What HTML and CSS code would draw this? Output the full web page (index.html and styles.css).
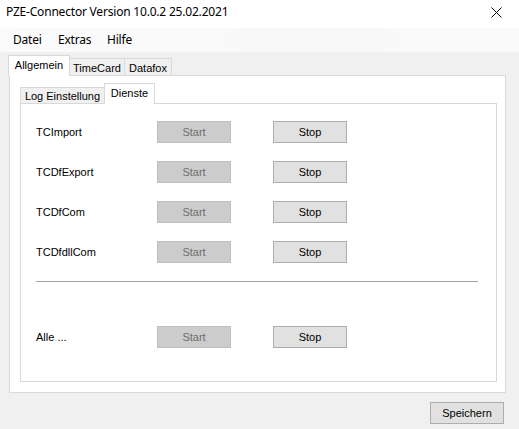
FILE: index.html
```html
<!DOCTYPE html>
<html lang="de">
<head>
<meta charset="utf-8">
<title>PZE-Connector</title>
<link rel="stylesheet" href="styles.css">
</head>
<body>
<div class="window">
  <div class="titlebar">
    <span class="title">PZE-Connector Version 10.0.2 25.02.2021</span>
    <span class="close">
      <svg width="11" height="11" viewBox="0 0 11 11"><path d="M0.5 0.5 L10.5 10.5 M10.5 0.5 L0.5 10.5" stroke="#000" stroke-width="1" fill="none"/></svg>
    </span>
  </div>
  <div class="menubar">
    <span class="menu-item m-datei">Datei</span>
    <span class="menu-item m-extras">Extras</span>
    <span class="menu-item">Hilfe</span>
  </div>
  <div class="main">
    <div class="tabs outer-tabs">
      <div class="tabstrip">
        <div class="tab selected w-allg">Allgemein</div>
        <div class="tab w-time">TimeCard</div>
        <div class="tab w-dfox">Datafox</div>
      </div>
      <div class="panel outer-panel">
        <div class="tabs inner-tabs">
          <div class="tabstrip">
            <div class="tab w-log">Log Einstellung</div>
            <div class="tab selected w-dien">Dienste</div>
          </div>
          <div class="panel inner-panel">
            <div class="row">
              <span class="label">TCImport</span>
              <span class="btn disabled">Start</span>
              <span class="btn">Stop</span>
            </div>
            <div class="row">
              <span class="label">TCDfExport</span>
              <span class="btn disabled">Start</span>
              <span class="btn">Stop</span>
            </div>
            <div class="row">
              <span class="label">TCDfCom</span>
              <span class="btn disabled">Start</span>
              <span class="btn">Stop</span>
            </div>
            <div class="row">
              <span class="label">TCDfdllCom</span>
              <span class="btn disabled">Start</span>
              <span class="btn">Stop</span>
            </div>
            <div class="separator"></div>
            <div class="row row-all">
              <span class="label">Alle ...</span>
              <span class="btn disabled">Start</span>
              <span class="btn">Stop</span>
            </div>
          </div>
        </div>
      </div>
    </div>
    <div class="footer">
      <span class="btn save">Speichern</span>
    </div>
  </div>
</div>
</body>
</html>
```

FILE: styles.css
```css
* { box-sizing: border-box; }
html, body { margin: 0; padding: 0; }
body {
  width: 519px;
  height: 429px;
  background: #f0f0f0;
  overflow: hidden;
  font-family: "Liberation Sans", Arial, sans-serif;
  font-size: 11px;
  color: #000;
}
.window { width: 519px; height: 429px; display: flex; flex-direction: column; }

.titlebar {
  height: 28px;
  background: #fff;
  display: flex;
  align-items: center;
  justify-content: space-between;
  padding-left: 6px;
  padding-right: 17px;
}
.title {
  font-family: "Noto Sans", "Open Sans", sans-serif;
  font-size: 12px;
  letter-spacing: -0.2px;
  line-height: 16px;
  margin-top: -4px;
}
.close {
  width: 11px;
  height: 11px;
  margin-top: -4px;
}
.close svg { display: block; }

.menubar {
  height: 24px;
  background: linear-gradient(to right, #fbfbfb, #f8f8f8 60%, #fafafa);
  display: flex;
  align-items: center;
  padding-left: 13px;
  font-family: "Noto Sans", "Open Sans", sans-serif;
  font-size: 12px;
  letter-spacing: -0.2px;
}
.menu-item { line-height: 16px; }
.m-datei { width: 45px; }
.m-extras { width: 49px; }

.main { flex: 1; display: flex; flex-direction: column; }

.tabs { display: flex; flex-direction: column; }
.tabstrip { display: flex; align-items: flex-end; height: 20px; padding-left: 1px; }
.tab {
  position: relative;
  height: 17px;
  border: 1px solid #d9d9d9;
  border-bottom: none;
  margin-left: -1px;
  background: #f0f0f0;
  display: flex;
  align-items: center;
  justify-content: center;
  padding-top: 1px;
  white-space: nowrap;
}
.tab.selected {
  height: 21px;
  margin-bottom: -1px;
  background: #fff;
  z-index: 1;
  padding-top: 0;
  padding-bottom: 3px;
}

.outer-tabs { margin: 3px 13px 0 9px; }
.outer-tabs > .tabstrip { margin-left: -1px; }
.w-allg { width: 62px; }
.w-time { width: 56px; }
.w-dfox { width: 48px; }

.panel { background: #fff; border: 1px solid #d9d9d9; }
.outer-panel { height: 318px; padding: 7px 8px 10px 10px; }

.inner-tabs .tabstrip { padding-left: 0; }
.inner-tabs .tab { background: #f0f0f0; }
.inner-tabs .tab.selected { background: #fff; }
.w-log { width: 85px; height: 16px; margin-left: 0; }
.w-dien { width: 51px; }
.inner-panel { height: 279px; padding: 17px 0 0 15px; }

.row {
  display: grid;
  grid-template-columns: 121px 74px 42px 74px;
  align-items: center;
  height: 22px;
  margin-bottom: 18px;
}
.row > .btn:nth-child(3) { grid-column: 4; }
.label { line-height: 13px; }

.btn {
  height: 22px;
  border: 1px solid #adadad;
  background: #e1e1e1;
  display: flex;
  align-items: center;
  justify-content: center;
  line-height: 13px;
}
.btn.disabled {
  background: #cccccc;
  border-color: #bfbfbf;
  color: #6d6d6d;
}

.separator {
  width: 442px;
  height: 1px;
  background: #a0a0a0;
  margin-top: 1px;
}
.row-all { margin-top: 44px; }

.footer { display: flex; justify-content: flex-end; padding: 9px 15px 0 0; }
.save { width: 74px; }
```
